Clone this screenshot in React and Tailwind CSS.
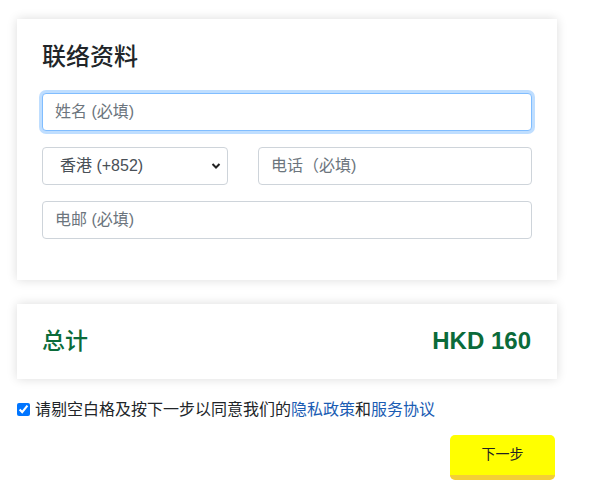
export default function App() {
  const font = { fontFamily: '"Liberation Sans", "Noto Sans CJK SC", sans-serif' };
  const inputCls =
    "block w-full h-[38px] rounded-[4px] border border-[#ced4da] bg-white px-3 text-[16px] text-[#495057] placeholder:text-[#6c757d] outline-none";

  return (
    <div className="min-h-screen bg-white pt-[19px] pl-[17px] text-[#212529]" style={font}>
      <div className="w-[540px]">
        <div className="bg-white shadow-[0_0_10px_rgba(0,0,0,0.14)] px-[25px] pt-[24px] pb-[41px]">
          <h4 className="text-[24px] font-medium leading-[1.2] mb-[21px]">联络资料</h4>
          <input
            autoFocus
            className="block w-full h-[38px] rounded-[4px] border border-[#80bdff] bg-white px-3 text-[16px] text-[#495057] placeholder:text-[#6c757d] outline-none shadow-[0_0_0_3px_rgba(0,123,255,0.25)]"
            placeholder="姓名 (必填)"
          />
          <div className="flex gap-[30px] mt-4">
            <div className="relative w-[186px] shrink-0">
              <select className="block w-full h-[38px] appearance-none rounded-[4px] border border-[#ced4da] bg-white pl-[17px] pr-8 text-[16px] text-[#495057] outline-none">
                <option>香港 (+852)</option>
                <option>澳门 (+853)</option>
                <option>中国 (+86)</option>
              </select>
              <svg
                className="pointer-events-none absolute right-[7px] top-[15px]"
                width="10"
                height="8"
                viewBox="0 0 10 8"
              >
                <path d="M1.5 2 L5 5.5 L8.5 2" fill="none" stroke="#222" strokeWidth="2" />
              </svg>
            </div>
            <input className={inputCls} placeholder="电话（必填)" />
          </div>
          <input className={inputCls + " mt-4"} placeholder="电邮 (必填)" />
        </div>

        <div className="mt-[24px] bg-white shadow-[0_0_10px_rgba(0,0,0,0.14)] h-[75px] px-[25px] flex items-center justify-between">
          <span className="text-[23px] font-medium text-[#0b6b3a]">总计</span>
          <span className="text-[24px] font-bold text-[#0b6b3a] mr-[1px]">HKD 160</span>
        </div>

        <label className="mt-[19px] flex items-center text-[16px] leading-6">
          <input type="checkbox" defaultChecked className="w-[13px] h-[13px] mr-[5px] accent-[#0075ff]" />
          <span>
            请剔空白格及按下一步以同意我们的
            <a href="#" className="text-[#1a5cb3]">隐私政策</a>和
            <a href="#" className="text-[#1a5cb3]">服务协议</a>
          </span>
        </label>

        <div className="flex justify-end mt-[13px] pr-[2px]">
          <button className="w-[105px] h-[45px] rounded-[5px] bg-[#ffff00] border-b-[5px] border-[#f3cf36] text-[14px] text-[#222]">
            下一步
          </button>
        </div>
      </div>
    </div>
  );
}
